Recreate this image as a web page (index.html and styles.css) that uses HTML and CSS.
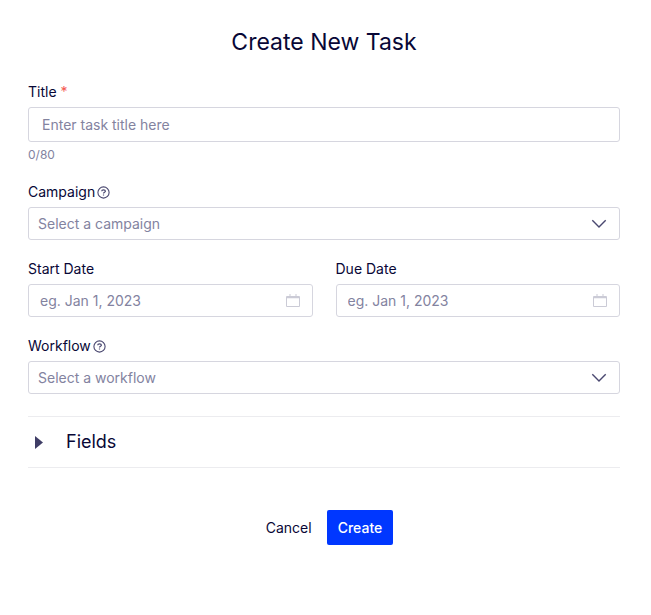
FILE: index.html
```html
<!DOCTYPE html>
<html lang="en">
<head>
    <meta charset="UTF-8">
    <meta name="viewport" content="width=device-width, initial-scale=1.0">
    <title>Create New Task</title>
    <link rel="stylesheet" href="styles.css">
</head>
<body>
    <main>
        <h1>Create New Task</h1>

        <form id="task-form">
            <div class="field">
                <label for="task-title">Title <span class="required">*</span></label>
                <input type="text" id="task-title" class="control title-input" placeholder="Enter task title here" maxlength="80" autocomplete="off" required>
                <div class="counter">0/80</div>
            </div>

            <div class="field">
                <div class="label-row">
                    <label for="campaign">Campaign</label>
                    <svg class="help-icon" width="13" height="13" viewBox="0 0 13 13" fill="none" stroke="currentColor">
                        <circle cx="6.5" cy="6.5" r="5.6" stroke-width="1.1"/>
                        <path d="M4.700 5.300c0-1 .8-1.500 1.800-1.500s1.900.5 1.900 1.400c0 1.100-1.900 1-1.900 2.300M6.500 8.400v1.100" stroke-width="1.200"/>
                    </svg>
                </div>
                <div class="control-wrap">
                    <select id="campaign" class="control">
                        <option value="">Select a campaign</option>
                    </select>
                    <svg class="control-icon chevron" width="16" height="10" viewBox="0 0 16 10" fill="none" stroke="currentColor" stroke-width="1.4">
                        <path d="M1.300 1.300L8 8l6.700-6.700"/>
                    </svg>
                </div>
            </div>

            <div class="date-row">
                <div class="field">
                    <label for="start-date">Start Date</label>
                    <div class="control-wrap">
                        <input type="text" id="start-date" class="control date-input" placeholder="eg. Jan 1, 2023" autocomplete="off">
                        <svg class="control-icon calendar" width="14" height="13" viewBox="0 0 14 13" fill="none" stroke="currentColor">
                            <path d="M.5 2.500h13v10H.5zM4 0v2M10 0v2"/>
                            <path d="M1 3.500h12" stroke-width="1.500"/>
                        </svg>
                    </div>
                </div>
                <div class="field">
                    <label for="due-date">Due Date</label>
                    <div class="control-wrap">
                        <input type="text" id="due-date" class="control date-input" placeholder="eg. Jan 1, 2023" autocomplete="off">
                        <svg class="control-icon calendar" width="14" height="13" viewBox="0 0 14 13" fill="none" stroke="currentColor">
                            <path d="M.5 2.500h13v10H.5zM4 0v2M10 0v2"/>
                            <path d="M1 3.500h12" stroke-width="1.500"/>
                        </svg>
                    </div>
                </div>
            </div>

            <div class="field">
                <div class="label-row">
                    <label for="workflow">Workflow</label>
                    <svg class="help-icon" width="13" height="13" viewBox="0 0 13 13" fill="none" stroke="currentColor">
                        <circle cx="6.5" cy="6.5" r="5.6" stroke-width="1.1"/>
                        <path d="M4.700 5.300c0-1 .8-1.500 1.800-1.500s1.900.5 1.900 1.400c0 1.100-1.900 1-1.900 2.300M6.500 8.400v1.100" stroke-width="1.200"/>
                    </svg>
                </div>
                <div class="control-wrap">
                    <select id="workflow" class="control">
                        <option value="">Select a workflow</option>
                    </select>
                    <svg class="control-icon chevron" width="16" height="10" viewBox="0 0 16 10" fill="none" stroke="currentColor" stroke-width="1.4">
                        <path d="M1.300 1.300L8 8l6.700-6.700"/>
                    </svg>
                </div>
            </div>

            <button type="button" class="fields-toggle" aria-expanded="false">
                <svg width="8" height="13" viewBox="0 0 8 13" fill="currentColor">
                    <path d="M0 0l8 6.500L0 13z"/>
                </svg>
                Fields
            </button>

            <div class="actions">
                <button type="button" class="btn">Cancel</button>
                <button type="submit" class="btn btn-primary">Create</button>
            </div>
        </form>
    </main>
</body>
</html>
```

FILE: styles.css
```css
:root {
    --text-color: #080736;
    --muted-color: #83839f;
    --icon-color: #4a4870;
    --border-color: #d6d6df;
    --divider-color: #ececef;
    --primary-color: #0037ff;
}

* {
    box-sizing: border-box;
}

body {
    margin: 0;
    font-family: Inter, sans-serif;
    font-size: 14px;
    line-height: 20px;
    color: var(--text-color);
    background-color: #ffffff;
}

main {
    padding: 26px 31px 40px 28px;
}

h1 {
    margin: 0 0 24px;
    font-size: 23px;
    font-weight: 400;
    line-height: 32px;
    text-align: center;
}

form {
    display: flex;
    flex-direction: column;
    gap: 19px;
}

.field {
    display: flex;
    flex-direction: column;
    gap: 5px;
}

.required {
    color: #f4574f;
}

.label-row {
    display: flex;
    align-items: center;
    gap: 2px;
}

.help-icon {
    color: var(--icon-color);
}

.control {
    display: block;
    width: 100%;
    height: 33px;
    margin: 0;
    padding: 0 40px 0 9px;
    font: inherit;
    color: var(--text-color);
    background-color: #ffffff;
    border: 1px solid var(--border-color);
    border-radius: 3px;
    appearance: none;
}

.control::placeholder {
    color: var(--muted-color);
    opacity: 1;
}

.control:focus {
    outline: none;
    border-color: var(--primary-color);
}

select.control {
    color: var(--muted-color);
}

.title-input {
    height: 35px;
    padding: 0 13px;
}

.date-input {
    padding-left: 11px;
}

.counter {
    font-size: 12px;
    line-height: 16px;
    color: var(--muted-color);
}

/* Icons sit over the right end of the control */
.control-wrap {
    position: relative;
}

.control-icon {
    position: absolute;
    top: 0;
    bottom: 0;
    right: 13px;
    margin: auto 0;
    pointer-events: none;
}

.chevron {
    color: var(--icon-color);
}

.calendar {
    color: #cbcbd6;
}

.date-row {
    display: grid;
    grid-template-columns: 1fr 1fr;
    gap: 23px;
}

button {
    margin: 0;
    font: inherit;
    color: inherit;
    background: none;
    border: none;
    cursor: pointer;
}

.fields-toggle {
    display: flex;
    align-items: center;
    gap: 23px;
    margin-top: 3px;
    padding: 13px 7px;
    font-size: 18px;
    line-height: 24px;
    border-top: 1px solid var(--divider-color);
    border-bottom: 1px solid var(--divider-color);
}

.fields-toggle svg {
    color: #3f3d66;
}

.actions {
    display: flex;
    justify-content: center;
    gap: 4px;
    margin-top: 23px;
}

.btn {
    height: 35px;
    padding: 0 11px;
    border-radius: 2px;
}

.btn-primary {
    font-weight: 500;
    color: #ffffff;
    background-color: var(--primary-color);
}
```
